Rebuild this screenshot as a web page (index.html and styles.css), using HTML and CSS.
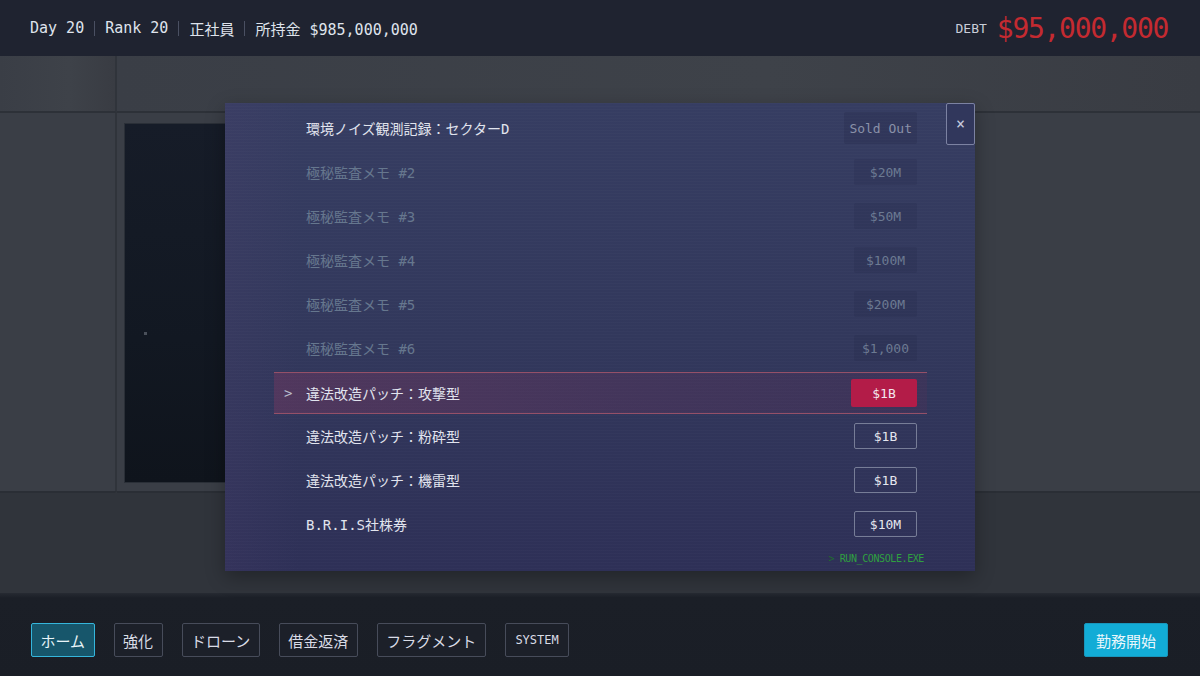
FILE: index.html
```html
<!DOCTYPE html>
<html lang="ja">
<head>
<meta charset="UTF-8">
<meta name="viewport" content="width=device-width, initial-scale=1.0">
<title>Black Office - Shop</title>
<link rel="stylesheet" href="styles.css">
</head>
<body>
<div class="screen">
    <header class="topbar">
        <div class="status">
            <span>Day 20</span>
            <span class="sep"></span>
            <span>Rank 20</span>
            <span class="sep"></span>
            <span>正社員</span>
            <span class="sep"></span>
            <span>所持金 $985,000,000</span>
        </div>
        <div class="debt">
            <span class="debt-label">DEBT</span>
            <span class="debt-value">$95,000,000</span>
        </div>
    </header>

    <main class="room">
        <div class="cell top-left"></div>
        <div class="cell top-right"></div>
        <div class="cell mid-left"></div>
        <div class="cell mid-right">
            <div class="monitor"><span class="pixel"></span></div>
        </div>
        <div class="cell low-left"></div>
        <div class="cell low-right"></div>

        <!-- shop window -->
        <section class="shop">
            <ul class="items">
                <li class="item">
                    <span class="name">環境ノイズ観測記録：セクターD</span>
                    <span class="price sold">Sold Out</span>
                </li>
                <li class="item locked">
                    <span class="name">極秘監査メモ #2</span>
                    <span class="price">$20M</span>
                </li>
                <li class="item locked">
                    <span class="name">極秘監査メモ #3</span>
                    <span class="price">$50M</span>
                </li>
                <li class="item locked">
                    <span class="name">極秘監査メモ #4</span>
                    <span class="price">$100M</span>
                </li>
                <li class="item locked">
                    <span class="name">極秘監査メモ #5</span>
                    <span class="price">$200M</span>
                </li>
                <li class="item locked">
                    <span class="name">極秘監査メモ #6</span>
                    <span class="price">$1,000</span>
                </li>
                <li class="item selected">
                    <span class="cursor">&gt;</span>
                    <span class="name">違法改造パッチ：攻撃型</span>
                    <span class="price">$1B</span>
                </li>
                <li class="item">
                    <span class="name">違法改造パッチ：粉砕型</span>
                    <span class="price">$1B</span>
                </li>
                <li class="item">
                    <span class="name">違法改造パッチ：機雷型</span>
                    <span class="price">$1B</span>
                </li>
                <li class="item">
                    <span class="name">B.R.I.S社株券</span>
                    <span class="price">$10M</span>
                </li>
            </ul>
            <button class="close">&times;</button>
            <div class="console"><span class="prompt">&gt;</span> RUN_CONSOLE.EXE</div>
        </section>
    </main>

    <nav class="navbar">
        <div class="tabs">
            <button class="tab active">ホーム</button>
            <button class="tab">強化</button>
            <button class="tab">ドローン</button>
            <button class="tab">借金返済</button>
            <button class="tab">フラグメント</button>
            <button class="tab small">SYSTEM</button>
        </div>
        <button class="work">勤務開始</button>
    </nav>
</div>
</body>
</html>
```

FILE: styles.css
```css
body {
    margin: 0;
    background: #1b1f27;
    font-family: "DejaVu Sans Mono", "Noto Sans CJK JP", monospace;
    color: #dde1ea;
}
.screen {
    width: 1200px;
    height: 676px;
    display: flex;
    flex-direction: column;
    overflow: hidden;
}

/* top status bar */
.topbar {
    height: 56px;
    flex: none;
    background: #1f2330;
    display: flex;
    align-items: center;
    justify-content: space-between;
    padding: 0 32px 0 30px;
}
.status {
    display: flex;
    align-items: center;
    gap: 10px;
    font-size: 15px;
    color: #dfe3ec;
}
.sep {
    width: 1px;
    height: 15px;
    background: #4a5062;
}
.debt {
    display: flex;
    align-items: center;
    gap: 10px;
}
.debt-label {
    font-size: 13px;
    color: #c9cdd8;
}
.debt-value {
    font-size: 28px;
    letter-spacing: -1.3px;
    color: #c42a30;
}

/* background room */
.room {
    position: relative;
    flex: 1;
    display: grid;
    grid-template-columns: 117px 1fr;
    grid-template-rows: 57px 378px 1fr;
    background: #373b43;
}
.cell {
    box-sizing: border-box;
}
.top-left, .top-right {
    background: linear-gradient(90deg, #3a3e46, #3e4249 60%, #393c43);
    border-bottom: 2px solid #2d3138;
}
.mid-left {
    background: #3a3e46;
}
.mid-right {
    background: #3a3e46;
    padding: 11px 0 0 8px;
}
.low-left, .low-right {
    background: #30343b;
    border-top: 2px solid #2a2e35;
}
.top-left, .mid-left, .low-left {
    border-right: 2px solid #30343b;
}
.monitor {
    width: 170px;
    height: 358px;
    background: linear-gradient(180deg, #161c28, #121822 60%, #0f141c);
    box-shadow: 0 0 0 1px #2a2f37;
    position: relative;
}
.pixel {
    position: absolute;
    left: 19px;
    top: 208px;
    width: 3px;
    height: 3px;
    background: #4a505a;
}

/* shop window */
.shop {
    position: absolute;
    left: 225px;
    top: 47px;
    width: 750px;
    height: 468px;
    box-sizing: border-box;
    padding-top: 3px;
    display: grid;
    grid-template-columns: 49px 653px 19px 29px;
    grid-template-rows: auto 1fr;
    background:
        repeating-linear-gradient(180deg, rgba(255, 255, 255, 0.015) 0 1px, transparent 1px 3px),
        linear-gradient(90deg, rgba(80, 64, 110, 0.18), transparent 10%),
        linear-gradient(180deg, #363d62, #32385c 50%, #2e3057);
    box-shadow: 0 6px 18px rgba(0, 0, 0, 0.3);
}
.items {
    grid-column: 2;
    grid-row: 1;
    list-style: none;
    margin: 0;
    padding: 0;
}
.item {
    position: relative;
    height: 44px;
    box-sizing: border-box;
    display: flex;
    align-items: center;
    justify-content: space-between;
    padding: 0 10px 0 32px;
    font-size: 14px;
    color: #e1e4ee;
}
.price {
    min-width: 63px;
    height: 26px;
    box-sizing: border-box;
    display: flex;
    align-items: center;
    justify-content: center;
    border: 1px solid #777d97;
    border-radius: 2px;
    font-size: 13px;
    color: #e4e6ee;
}
.price.sold {
    height: 32px;
    padding: 0 4px;
    border-color: transparent;
    background: rgba(20, 24, 50, 0.14);
    color: #8a91a8;
}
.item.locked .name {
    color: #66778e;
}
.item.locked .price {
    border-color: transparent;
    background: rgba(20, 24, 50, 0.1);
    color: #6c7a92;
}
.item.selected {
    margin-top: 2px;
    height: 42px;
    border-top: 1px solid #955068;
    border-bottom: 1px solid #955068;
    background: linear-gradient(90deg, rgba(130, 56, 96, 0.38), rgba(112, 50, 90, 0.26) 60%, rgba(100, 44, 84, 0.2));
}
.item.selected .price {
    min-width: 66px;
    height: 28px;
    border: none;
    background: #b31c48;
    color: #f2e6ee;
}
.cursor {
    position: absolute;
    left: 10px;
    font-size: 14px;
    color: #b8bccc;
}
.close {
    grid-column: 4;
    grid-row: 1;
    align-self: start;
    margin-top: -3px;
    width: 29px;
    height: 42px;
    padding: 0;
    border: 1px solid #7c82a2;
    border-radius: 2px;
    background: #31375c;
    color: #c6cadc;
    font-family: inherit;
    font-size: 15px;
}
.console {
    grid-column: 2;
    grid-row: 2;
    justify-self: end;
    margin: 7px 3px 0 0;
    font-size: 10px;
    letter-spacing: -0.4px;
    color: #2fa040;
}
.prompt {
    color: #1f6e2d;
}

/* bottom navigation */
.navbar {
    height: 83px;
    flex: none;
    box-sizing: border-box;
    display: flex;
    align-items: flex-start;
    justify-content: space-between;
    padding: 30px 32px 0 31px;
    background: linear-gradient(180deg, #262a32 0, #1b1f27 5px, #1a1e26);
}
.tabs {
    display: flex;
    gap: 19px;
}
.tab, .work {
    height: 34px;
    padding: 0 8.5px;
    border: 1px solid #474c5a;
    border-radius: 2px;
    background: #1c2029;
    color: #d9dce6;
    font-family: inherit;
    font-size: 15px;
    cursor: pointer;
}
.tab.small {
    font-size: 12px;
    padding: 0 9.5px;
}
.tab.active {
    background: #17566b;
    border-color: #35b6dc;
    color: #e8f4f8;
}
.work {
    padding: 0 11px;
    background: #12acd6;
    border-color: #1896bc;
    color: #eaf7fc;
}
```
